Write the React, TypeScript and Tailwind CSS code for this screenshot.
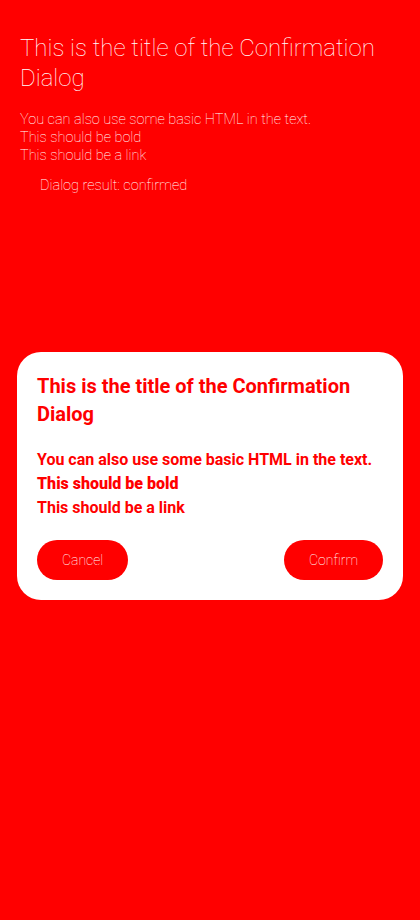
export default function App() {
  return (
    <div
      className="relative min-h-[920px] w-full bg-[#ff0000] text-white"
      style={{ fontFamily: "Roboto, 'Noto Sans', sans-serif" }}
    >
      {/* Page behind the dialog */}
      <div className="px-5 pt-[33px]">
        <h1 className="text-2xl leading-[30px] font-thin">
          This is the title of the Confirmation Dialog
        </h1>
        <div className="mt-[18px] text-[14.5px] leading-[18px] font-thin">
          <p>You can also use some basic HTML in the text.</p>
          <p>This should be bold</p>
          <p>This should be a link</p>
        </div>
        <p className="mt-[12px] pl-5 text-[14.5px] leading-[18px] font-thin">
          Dialog result: confirmed
        </p>
      </div>

      {/* Dialog */}
      <div className="fixed inset-0 flex items-center justify-center pt-[32px]">
        <div className="flex w-[386px] flex-col gap-5 rounded-3xl bg-white p-5 text-[#ff0000]">
          <h2 className="text-[20px] leading-[28px] font-bold">
            This is the title of the Confirmation Dialog
          </h2>
          <div className="text-base leading-6 font-bold">
            <p>You can also use some basic HTML in the text.</p>
            <p>
              <b>This should be bold</b>
            </p>
            <p>
              <a href="#">This should be a link</a>
            </p>
          </div>
          <div className="flex items-center justify-between">
            <button className="h-10 rounded-full bg-[#ff0000] px-[25px] text-sm font-thin text-white">
              Cancel
            </button>
            <button className="h-10 rounded-full bg-[#ff0000] px-[25px] text-sm font-thin text-white">
              Confirm
            </button>
          </div>
        </div>
      </div>
    </div>
  );
}
